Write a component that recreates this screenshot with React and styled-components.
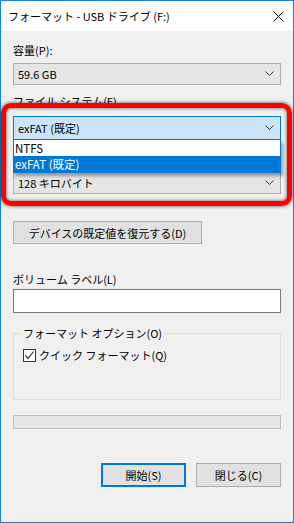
import React from 'react';
import styled, { createGlobalStyle } from 'styled-components';

const GlobalStyle = createGlobalStyle`
    html, body {
        margin: 0;
        padding: 0;
        background: #ffffff;
    }
    body {
        font-family: "Noto Sans CJK JP", "Noto Sans", sans-serif;
        font-size: 11px;
        color: #000;
    }
`;

const Window = styled.div`
    position: relative;
    width: 294px;
    height: 523px;
    box-sizing: border-box;
    border: 1px solid #1883d7;
    display: flex;
    flex-direction: column;
    background: #f0f0f0;
`;

const TitleBar = styled.div`
    height: 30px;
    background: #ffffff;
    display: flex;
    align-items: center;
    justify-content: space-between;
    padding: 0 9px 0 7px;
    font-size: 11px;
`;

const Body = styled.div`
    flex: 1;
    display: flex;
    flex-direction: column;
    padding: 11px 12px 0 12px;
`;

const Label = styled.div`
    height: 16px;
    line-height: 16px;
    margin-top: ${p => p.$mt || 0}px;
    white-space: nowrap;
`;

// the label of the third field sits under the open list
const HiddenLabel = styled.div`
    height: 16px;
    margin-top: 8px;
`;

const SelectWrap = styled.div`
    position: relative;
    margin-top: ${p => p.$mt || 0}px;
`;

const Select = styled.div`
    height: ${p => p.$h || 22}px;
    box-sizing: border-box;
    border: 1px solid ${p => (p.$focus ? '#0078d7' : '#adadad')};
    background: ${p => (p.$focus ? '#cce4f7' : '#e5e5e5')};
    display: flex;
    align-items: center;
    justify-content: space-between;
    padding: 0 6px 0 4px;
`;

const DropList = styled.div`
    position: absolute;
    left: 0;
    right: 0;
    top: 100%;
    border: 1px solid #0078d7;
    border-top: none;
    background: #ffffff;
    box-shadow: 2px 3px 3px rgba(0, 0, 0, 0.35);
    z-index: 2;
`;

const Option = styled.div`
    height: 16px;
    line-height: 16px;
    padding-left: 1px;
    background: ${p => (p.$active ? '#0078d7' : '#ffffff')};
    color: ${p => (p.$active ? '#ffffff' : '#000000')};
    font-size: 11.5px;
`;

const Button = styled.div`
    height: ${p => p.$h || 24}px;
    width: ${p => p.$w}px;
    box-sizing: border-box;
    border: ${p => (p.$primary ? '2px solid #0078d7' : '1px solid #adadad')};
    background: #e1e1e1;
    display: flex;
    align-items: center;
    justify-content: center;
    white-space: nowrap;
`;

const Input = styled.div`
    margin-top: 2px;
    height: 24px;
    box-sizing: border-box;
    border: 1px solid #7a7a7a;
    background: #ffffff;
`;

const Group = styled.fieldset`
    margin: 12px 0 0 0;
    padding: 6px 0 0 9px;
    height: 75px;
    box-sizing: border-box;
    border: 1px solid #dcdcdc;
    min-width: 0;
`;

const Legend = styled.legend`
    margin-left: -2px;
    padding: 0 2px;
    line-height: 16px;
`;

const CheckRow = styled.div`
    display: flex;
    align-items: center;
    gap: 3px;
`;

const CheckBox = styled.div`
    width: 13px;
    height: 13px;
    box-sizing: border-box;
    border: 1px solid #333333;
    background: #ffffff;
    display: flex;
    align-items: center;
    justify-content: center;
`;

const Progress = styled.div`
    margin-top: 15px;
    height: 14px;
    box-sizing: border-box;
    border: 1px solid #bcbcbc;
    background: #e6e6e6;
`;

const ButtonRow = styled.div`
    margin-top: 34px;
    display: flex;
    justify-content: flex-end;
    gap: 10px;
`;

const Highlight = styled.div`
    position: absolute;
    left: 0;
    top: 102px;
    width: 291px;
    height: 103px;
    box-sizing: border-box;
    border: 5px solid #ff0000;
    border-radius: 10px;
    box-shadow: 0 0 3px 1px rgba(0, 0, 0, 0.4), inset 0 0 3px 1px rgba(0, 0, 0, 0.4);
    pointer-events: none;
    z-index: 3;
`;

const Chevron = () => (
    <svg width="9" height="6" viewBox="0 0 9 6">
        <polyline points="0.5,0.5 4.5,4.5 8.5,0.5" fill="none" stroke="#333" strokeWidth="1" />
    </svg>
);

const CloseIcon = () => (
    <svg width="11" height="11" viewBox="0 0 11 11">
        <path d="M0.5 0.5 L10.5 10.5 M10.5 0.5 L0.5 10.5" stroke="#000" strokeWidth="1" />
    </svg>
);

const Check = () => (
    <svg width="11" height="11" viewBox="0 0 11 11">
        <polyline points="1.5,5.5 4,8.5 9.5,1.5" fill="none" stroke="#333" strokeWidth="1.2" />
    </svg>
);

const App = () => {
    return (
        <>
            <GlobalStyle />
            <Window>
                <TitleBar>
                    <span>フォーマット - USB ドライブ (F:)</span>
                    <CloseIcon />
                </TitleBar>
                <Body>
                    <Label>容量(P):</Label>
                    <SelectWrap $mt={5}>
                        <Select>
                            <span>59.6 GB</span>
                            <Chevron />
                        </Select>
                    </SelectWrap>

                    <Label $mt={8}>ファイル システム(F)</Label>
                    <SelectWrap $mt={7}>
                        <Select $focus $h={24}>
                            <span>exFAT (既定)</span>
                            <Chevron />
                        </Select>
                        <DropList>
                            <Option>NTFS</Option>
                            <Option $active>exFAT (既定)</Option>
                        </DropList>
                    </SelectWrap>

                    <HiddenLabel />
                    <SelectWrap $mt={8}>
                        <Select>
                            <span>128 キロバイト</span>
                            <Chevron />
                        </Select>
                    </SelectWrap>

                    <SelectWrap $mt={27}>
                        <Button $w={189} $h={23}>デバイスの既定値を復元する(D)</Button>
                    </SelectWrap>

                    <Label $mt={27}>ボリューム ラベル(L)</Label>
                    <Input />

                    <Group>
                        <Legend>フォーマット オプション(O)</Legend>
                        <CheckRow>
                            <CheckBox>
                                <Check />
                            </CheckBox>
                            <span>クイック フォーマット(Q)</span>
                        </CheckRow>
                    </Group>

                    <Progress />

                    <ButtonRow>
                        <Button $primary $w={85}>開始(S)</Button>
                        <Button $w={85}>閉じる(C)</Button>
                    </ButtonRow>
                </Body>
                <Highlight />
            </Window>
        </>
    );
};

export default App;
